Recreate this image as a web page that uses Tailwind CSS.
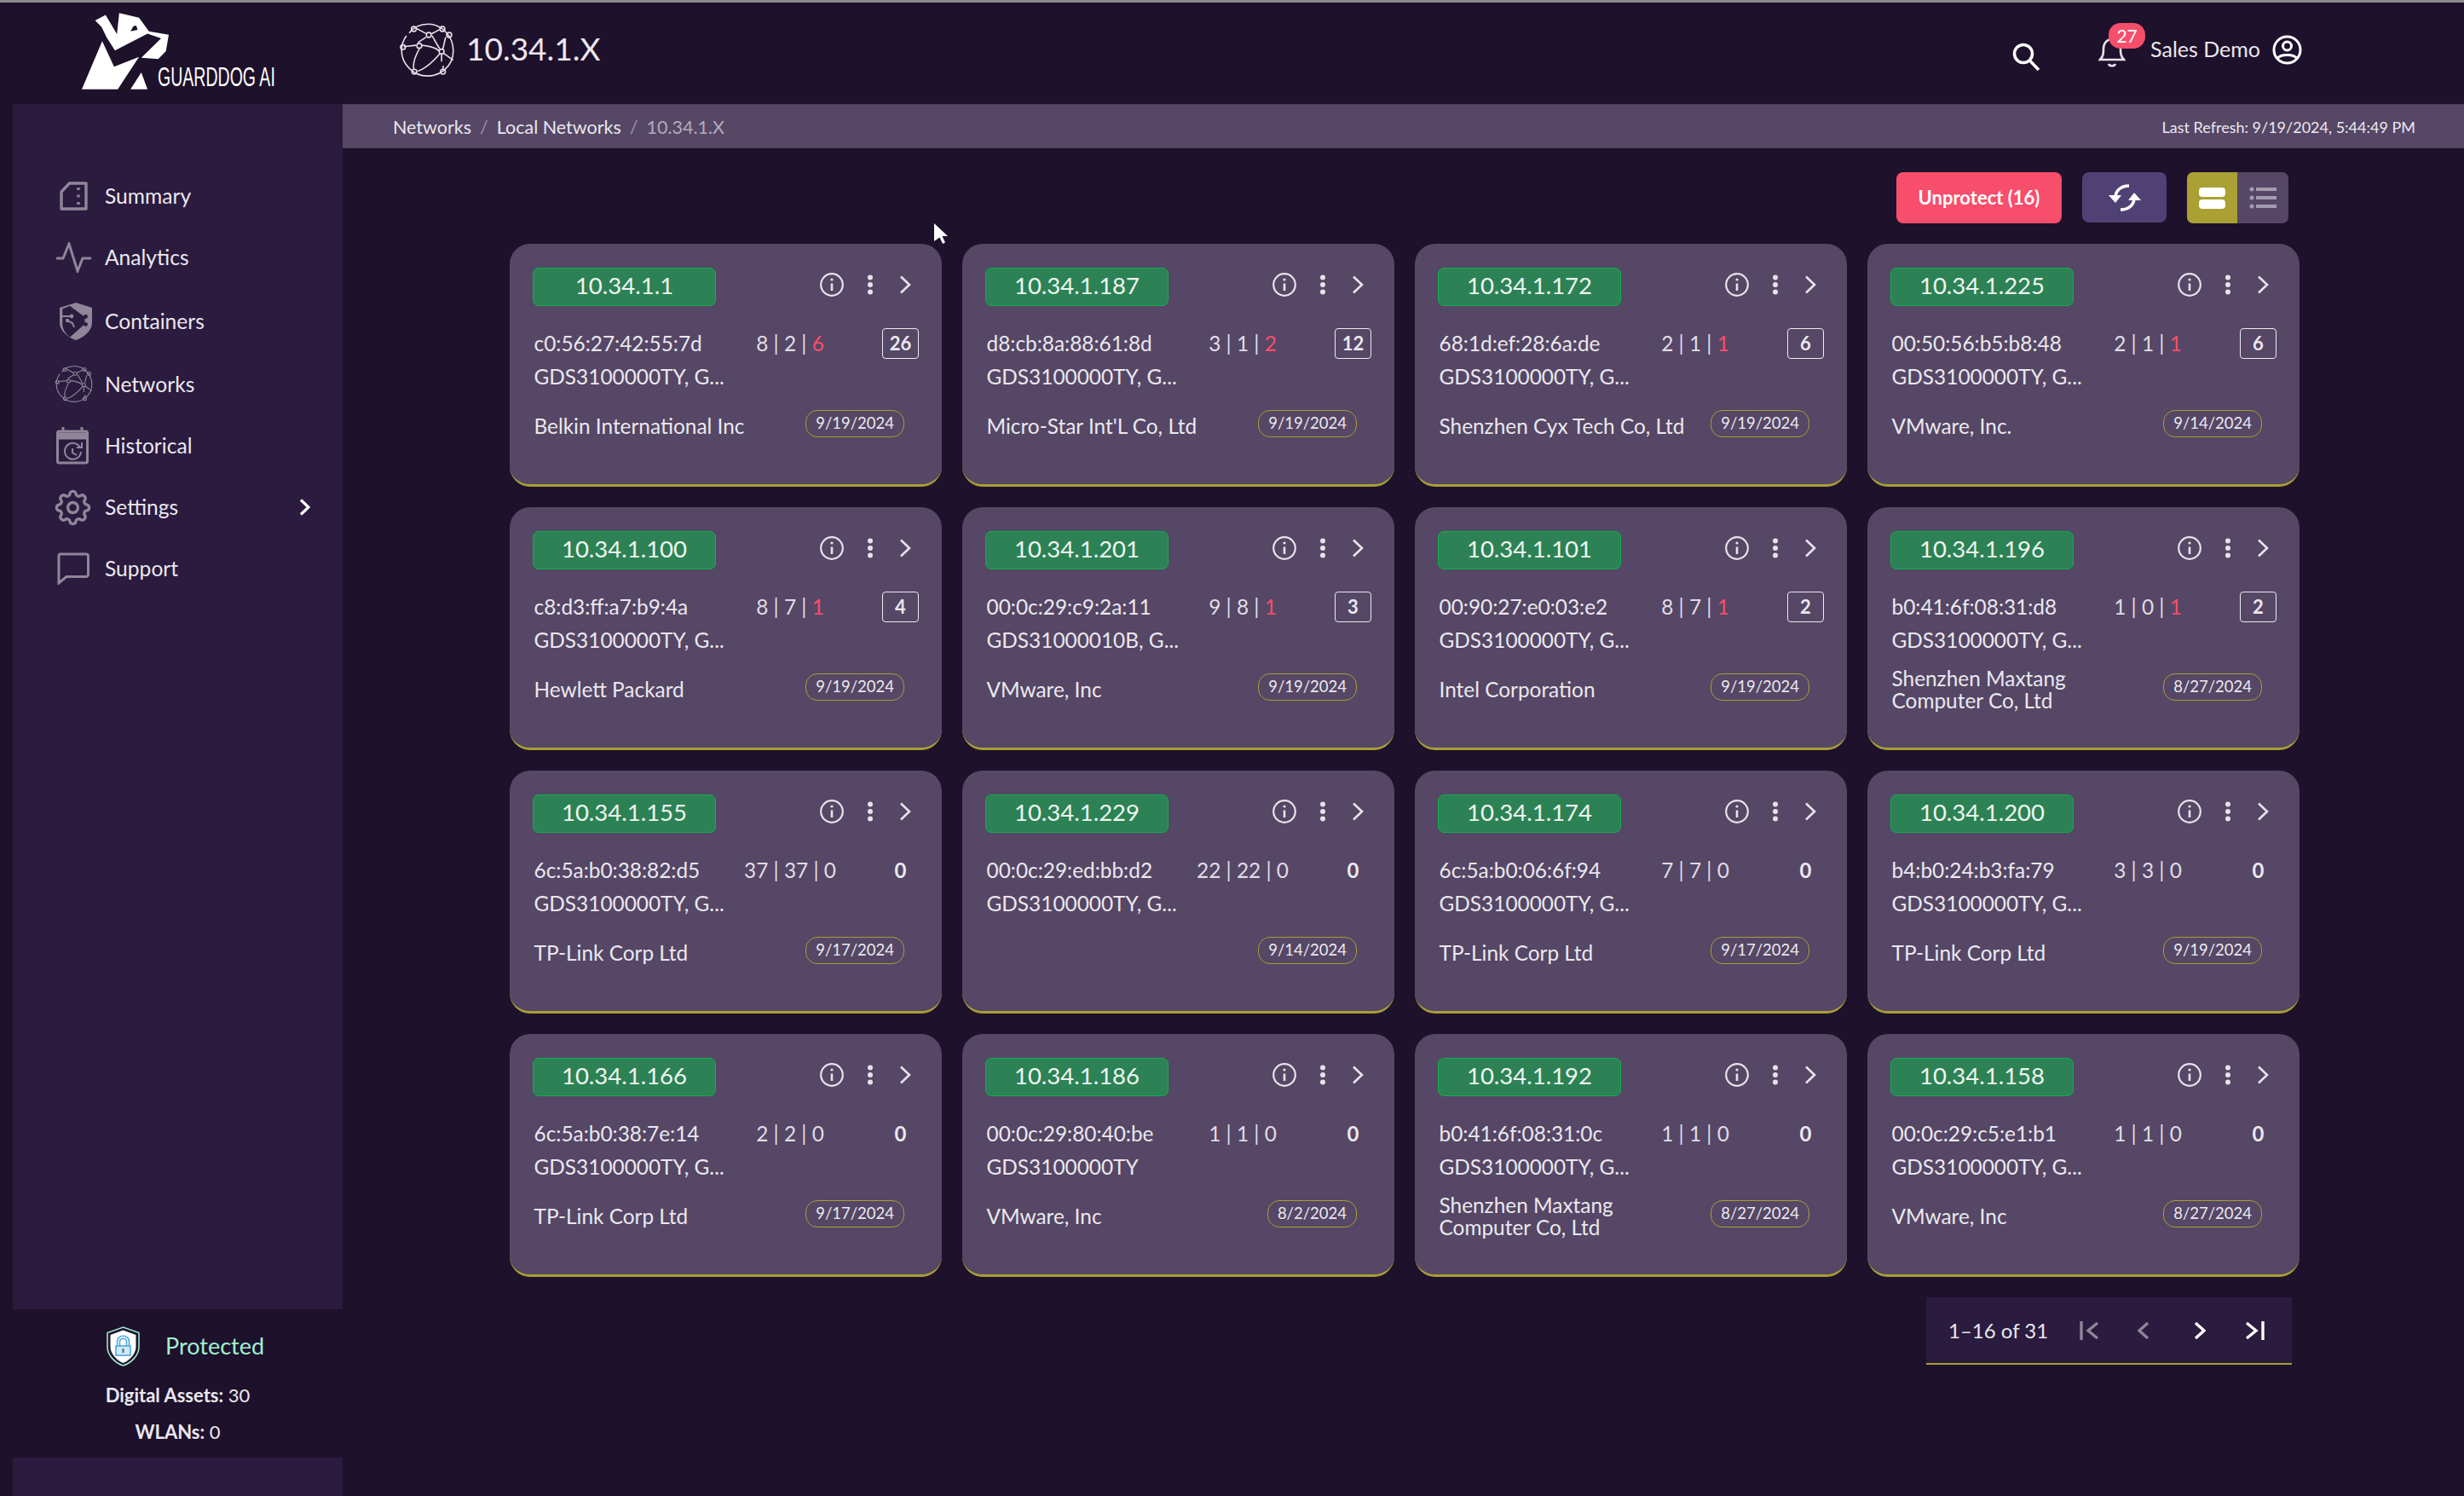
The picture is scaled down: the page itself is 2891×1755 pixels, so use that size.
<!DOCTYPE html>
<html lang="en">
<head>
    <meta charset="UTF-8">
    <meta name="viewport" content="width=device-width, initial-scale=1.0">
    <title>Guarddog AI - 10.34.1.X</title>
    <script src="https://cdn.jsdelivr.net/npm/@tailwindcss/browser@4"></script>
</head>
<body class="bg-[#1e112b] text-[#ebe8ef] font-['Lato',sans-serif] w-[2891px] h-[1755px] overflow-hidden relative">
    <svg class="hidden">
        <symbol id="globe" viewBox="50 45 210 210">
            <g fill="none" stroke="currentColor" stroke-width="5">
                <path d="M88 85C108 58 135 52 158 52C205 52 250 95 250 150C250 205 205 243 155 243C105 243 60 200 60 150C60 125 70 105 78 95"/>
                <path d="M115 68L150 87M170 88L200 72M172 95L200 143M68 135L113 130M135 130C160 132 185 140 198 150M125 143C110 170 100 195 105 217M120 225C150 215 180 185 200 162M215 160L250 185M207 163V190M214 205L212 217M120 120L150 100M222 100L212 143"/>
                <circle cx="105" cy="70" r="9"/><circle cx="210" cy="70" r="9"/><circle cx="235" cy="92" r="9"/>
                <circle cx="160" cy="92" r="9"/><circle cx="125" cy="132" r="9"/><circle cx="65" cy="137" r="9"/>
                <circle cx="207" cy="153" r="9"/><circle cx="107" cy="227" r="9"/><circle cx="212" cy="227" r="9"/>
            </g>
        </symbol>
    </svg>

    <div class="h-[3px] bg-[#8a8a8a]"></div>

    <!-- Header -->
    <header class="h-[119px] flex">
        <div class="w-[402px] shrink-0 pl-[96px] pt-[12px] flex items-start">
            <svg class="w-[103px] h-[90px] shrink-0" viewBox="108 45 310 270" fill="#fff">
                <path d="M155 72L192 52L232 120L240 45L310 62L345 110L415 122L405 180L378 208L318 203L388 135L340 118L225 178L195 130L178 95Z"/>
                <path d="M108 315L180 145L222 235L310 200L235 315Z"/>
                <path d="M280 315L318 255L340 315Z"/>
                <path d="M290 92L300 90L305 105L280 110Z" fill="#1e112b"/>
            </svg>
            <span class="-ml-[14px] mt-[58px] text-[31px] leading-[36px] text-white font-['Liberation_Sans',sans-serif] whitespace-nowrap origin-left scale-x-[0.63]">GUARDDOG AI</span>
        </div>
        <div class="flex items-start pl-[66px] pt-[23px]">
            <svg class="w-[67px] h-[67px] text-[#e6e3ea]"><use href="#globe"/></svg>
            <span class="ml-[12px] mt-[6px] text-[37px] leading-[50px]">10.34.1.X</span>
        </div>
        <div class="ml-auto flex items-start pr-[190px]">
            <svg class="w-[34px] h-[34px] mt-[46px] mr-[66px] text-white" viewBox="0 0 34 34" fill="none" stroke="currentColor" stroke-width="3.5"><circle cx="14" cy="14" r="10.5"/><path d="M21.5 22L32 33"/></svg>
            <div class="relative w-[45px] mt-[24px]">
                <svg class="w-[32px] h-[36px] ml-[2px] mt-[16px] text-[#e6e3ea]" viewBox="0 0 32 36" fill="none" stroke="currentColor" stroke-width="2.6"><path d="M2 27C6 23 6 19 6 14C6 8 10 3 16 3C22 3 26 8 26 14C26 19 26 23 30 27Z"/><path d="M12 32C13 35 19 35 20 32"/></svg>
                <span class="absolute left-[14px] top-0 w-[43px] h-[30px] rounded-[14px] bg-[#f74e6c] text-white text-[21px] leading-[30px] text-center">27</span>
            </div>
            <span class="ml-[18px] mt-[38px] text-[25px] leading-[32px]">Sales Demo</span>
            <svg class="w-[35px] h-[35px] ml-[14px] mt-[38px] text-white" viewBox="0 0 35 35" fill="none" stroke="currentColor" stroke-width="3"><circle cx="17.5" cy="17.5" r="15.5"/><circle cx="17.5" cy="13" r="5"/><path d="M6 28C9 22 26 22 29 28"/></svg>
        </div>
    </header>

    <div class="flex h-[1633px]">
        <!-- Sidebar -->
        <aside class="w-[387px] ml-[15px] shrink-0 bg-[#2a1b3f] flex flex-col">
            <nav class="pt-[72px] flex flex-col text-[24.6px]">
                <a class="h-[72px] flex items-center"><span class="w-[108px] pl-[55px]"><svg class="w-[33px] h-[34px] text-[#8f8699]" viewBox="0 0 33 34" fill="none" stroke="currentColor" stroke-width="3.4"><path d="M2 12L11.5 2H31V32H2Z" stroke-linejoin="round"/><path d="M22 7V10M22 15.5V18.5M22 24V27" stroke-width="3.4"/></svg></span><span>Summary</span></a>
                <a class="h-[72px] flex items-center"><span class="w-[108px] pl-[51px]"><svg class="w-[41px] h-[36px] text-[#8f8699]" viewBox="0 0 41 36" fill="none" stroke="currentColor" stroke-width="3" stroke-linecap="round"><path d="M1 19H8L15 2L25 34L31 19H40"/></svg></span><span>Analytics</span></a>
                <a class="h-[72px] mt-[3px] flex items-center"><span class="w-[108px] pl-[55px]"><svg class="w-[38px] h-[44px] text-[#8f8699]" viewBox="0 0 38 44" fill="currentColor"><path d="M19 0L38 6V24C38 33 28 41 19 44C10 41 0 33 0 24V6Z"/><path d="M3.3 7.6L13 3.5L30 16V26L13 41C8 38 3.3 32 3.3 25Z" fill="#2a1b3f"/><path d="M13 3.5L30.5 16.5V25.5L13 41M3 16H14M9 21L15 24L17 29" fill="none" stroke="currentColor" stroke-width="2"/><circle cx="14" cy="16" r="2.4"/><circle cx="9" cy="21" r="2.2"/><circle cx="30.5" cy="16.5" r="2.4" fill="#2a1b3f"/><circle cx="30.5" cy="25.5" r="2.4" fill="#2a1b3f"/></svg></span><span>Containers</span></a>
                <a class="h-[72px] mt-[2px] flex items-center"><span class="w-[108px] pl-[49px]"><svg class="w-[46px] h-[46px] text-[#8f8699]"><use href="#globe"/></svg></span><span>Networks</span></a>
                <a class="h-[72px] flex items-center"><span class="w-[108px] pl-[51px]"><svg class="w-[38px] h-[44px] text-[#8f8699]" viewBox="0 0 38 44" fill="none" stroke="currentColor" stroke-width="3"><rect x="1.5" y="5" width="35" height="37" rx="2"/><path d="M1 8H37V13H1Z" fill="currentColor"/><path d="M8 0V6M30 0V6"/><path d="M28 24A9.5 9.5 0 1 0 29 29" stroke-width="2"/><path d="M19 25V30L24 33" stroke-width="2"/><path d="M24 24H30V18" stroke-width="2"/></svg></span><span>Historical</span></a>
                <a class="h-[72px] flex items-center relative"><span class="w-[108px] pl-[48px]"><svg class="w-[45px] h-[45px] text-[#8f8699]" viewBox="0 0 24 24" fill="none" stroke="currentColor" stroke-width="1.8"><path d="M20.8 10.13A1.95 1.95 0 0 1 20.8 13.87A1.8 1.8 0 0 0 19.55 16.9A1.95 1.95 0 0 1 16.9 19.55A1.8 1.8 0 0 0 13.87 20.8A1.95 1.95 0 0 1 10.13 20.8A1.8 1.8 0 0 0 7.1 19.55A1.95 1.95 0 0 1 4.45 16.9A1.8 1.8 0 0 0 3.2 13.87A1.95 1.95 0 0 1 3.2 10.13A1.8 1.8 0 0 0 4.45 7.1A1.95 1.95 0 0 1 7.1 4.45A1.8 1.8 0 0 0 10.13 3.2A1.95 1.95 0 0 1 13.87 3.2A1.8 1.8 0 0 0 16.9 4.45A1.95 1.95 0 0 1 19.55 7.1A1.8 1.8 0 0 0 20.8 10.13Z"/><circle cx="12" cy="12" r="3.2"/></svg></span><span>Settings</span><svg class="absolute left-[336px] top-[26px] w-[13px] h-[20px] text-white" viewBox="0 0 13 20" fill="none" stroke="currentColor" stroke-width="3.2"><path d="M2 1.5L11 10L2 18.5"/></svg></a>
                <a class="h-[72px] flex items-center"><span class="w-[108px] pl-[52px]"><svg class="w-[38px] h-[38px] text-[#8f8699]" viewBox="0 0 38 38" fill="none" stroke="currentColor" stroke-width="3"><path d="M4 2H34A2.5 2.5 0 0 1 36.5 4.5V26A2.5 2.5 0 0 1 34 28.5H11L2 36V4A2 2 0 0 1 4 2Z"/></svg></span><span>Support</span></a>
            </nav>
        </aside>

        <!-- Main -->
        <main class="flex-1 min-w-0">
            <div class="h-[52px] bg-[#554765] border-y border-[#4a3d5c] flex items-center justify-between pl-[59px] pr-[57px] pt-[2px] text-[21.5px]">
                <div class="flex items-center">
                    <span>Networks</span><span class="mx-[10px] text-[#9b91a8]">/</span><span>Local Networks</span><span class="mx-[10px] text-[#9b91a8]">/</span><span class="text-[#b3aabd]">10.34.1.X</span>
                </div>
                <span class="text-[18px]">Last Refresh: 9/19/2024, 5:44:49 PM</span>
            </div>

            <div class="flex justify-end items-start pt-[28px] pr-[206px] gap-[24px]">
                <button class="w-[194px] h-[60px] pb-[2px] rounded-[8px] bg-[#f74e6c] text-white text-[22px] font-bold">Unprotect (16)</button>
                <button class="w-[99px] h-[59px] rounded-[8px] bg-[#4f4174] flex items-center justify-center">
                    <svg class="w-[38px] h-[32px] text-white" viewBox="0 0 38 32" fill="none" stroke="currentColor" stroke-width="3.6"><path d="M8 16C8 8 14 2 24 2"/><path d="M0 13H15L8 22Z" fill="currentColor" stroke="none"/><path d="M30 16C30 24 24 30 14 30"/><path d="M38 19H23L30 10Z" fill="currentColor" stroke="none"/></svg>
                </button>
                <div class="flex w-[119px] h-[60px] rounded-[7px] overflow-hidden">
                    <span class="w-[59px] bg-[#aaa034] flex flex-col items-center justify-center gap-[3px]">
                        <i class="block w-[31px] h-[11px] rounded-[4px] bg-white"></i>
                        <i class="block w-[31px] h-[11px] rounded-[4px] bg-white"></i>
                    </span>
                    <span class="w-[60px] bg-[#554765] flex items-center justify-center">
                        <svg class="w-[32px] h-[26px] text-[#a39cae]" viewBox="0 0 32 26" fill="currentColor"><circle cx="3" cy="3" r="2.5"/><circle cx="3" cy="13" r="2.5"/><circle cx="3" cy="23" r="2.5"/><rect x="8" y="1" width="24" height="4"/><rect x="8" y="11" width="24" height="4"/><rect x="8" y="21" width="24" height="4"/></svg>
                    </span>
                </div>
            </div>

            <div id="cards" class="w-[2100px] ml-[196px] mt-[24px] grid grid-cols-4 gap-[24px]"></div>

            <div class="w-[429px] h-[79px] ml-[1858px] mt-[24px] bg-[#2a1b3f] border-b-2 border-[#a89f35] flex items-center pl-[26px]">
                <span class="text-[24px] w-[154px] shrink-0">1–16 of 31</span>
                <svg class="w-[23px] h-[22px] text-[#8f8699]" viewBox="0 0 23 22" fill="none" stroke="currentColor" stroke-width="3.4"><path d="M2 0V22"/><path d="M21 2L10 11L21 20"/></svg>
                <svg class="w-[14px] h-[22px] ml-[45px] text-[#8f8699]" viewBox="0 0 14 22" fill="none" stroke="currentColor" stroke-width="3.4"><path d="M12 2L2 11L12 20"/></svg>
                <svg class="w-[14px] h-[22px] ml-[52px] text-white" viewBox="0 0 14 22" fill="none" stroke="currentColor" stroke-width="3.4"><path d="M2 2L12 11L2 20"/></svg>
                <svg class="w-[23px] h-[22px] ml-[46px] text-white" viewBox="0 0 23 22" fill="none" stroke="currentColor" stroke-width="3.4"><path d="M2 2L13 11L2 20"/><path d="M21 0V22"/></svg>
            </div>
        </main>
    </div>

    <!-- Status block over the sidebar -->
    <div class="absolute left-[15px] top-[1536px] w-[387px] h-[174px] bg-[#1e112b]">
        <div class="flex items-center pl-[110px] pt-[20px]">
            <svg class="w-[39px] h-[47px] shrink-0" viewBox="0 0 39 47">
                <path d="M19.5 1L38 7.5V24C38 34 29 43 19.5 46C10 43 1 34 1 24V7.5Z" fill="#1e112b" stroke="#9ae8cc" stroke-width="1.6"/>
                <path d="M19.5 4.5L34.5 10V24C34.5 32 27 40 19.5 43C12 40 4.5 32 4.5 24V10Z" fill="#fff"/>
                <path d="M12.5 23V18C12.5 9 26.5 9 26.5 18V23M15.5 23V18C15.5 13 23.5 13 23.5 18V23" fill="none" stroke="#4aa8dc" stroke-width="1.6"/>
                <rect x="11" y="23" width="17" height="11" fill="#d3e9f6" stroke="#4aa8dc" stroke-width="1.6"/>
                <path d="M19.5 26V31" stroke="#2b6f9e" stroke-width="2"/>
            </svg>
            <span class="ml-[30px] text-[27px] text-[#a0f0d2] -mt-[1px]">Protected</span>
        </div>
        <p class="text-center text-[22px] leading-[30px] mt-[19px]"><b>Digital Assets:</b> 30</p>
        <p class="text-center text-[22px] leading-[30px] mt-[13px]"><b>WLANs:</b> 0</p>
    </div>

    <!-- Mouse pointer -->
    <svg class="absolute left-[1094px] top-[260px] w-[20px] h-[30px]" viewBox="0 0 20 30"><path d="M2 2L18 17H11.5L15 24.5L12 26L8.5 18.5L2 23Z" fill="#fff"/></svg>

    <script>
        const devices = [
            ['10.34.1.1', 'c0:56:27:42:55:7d', '8 | 2 | ', '6', '26', 'GDS3100000TY, G...', 'Belkin International Inc', '9/19/2024'],
            ['10.34.1.187', 'd8:cb:8a:88:61:8d', '3 | 1 | ', '2', '12', 'GDS3100000TY, G...', "Micro-Star Int'L Co, Ltd", '9/19/2024'],
            ['10.34.1.172', '68:1d:ef:28:6a:de', '2 | 1 | ', '1', '6', 'GDS3100000TY, G...', 'Shenzhen Cyx Tech Co, Ltd', '9/19/2024'],
            ['10.34.1.225', '00:50:56:b5:b8:48', '2 | 1 | ', '1', '6', 'GDS3100000TY, G...', 'VMware, Inc.', '9/14/2024'],
            ['10.34.1.100', 'c8:d3:ff:a7:b9:4a', '8 | 7 | ', '1', '4', 'GDS3100000TY, G...', 'Hewlett Packard', '9/19/2024'],
            ['10.34.1.201', '00:0c:29:c9:2a:11', '9 | 8 | ', '1', '3', 'GDS31000010B, G...', 'VMware, Inc', '9/19/2024'],
            ['10.34.1.101', '00:90:27:e0:03:e2', '8 | 7 | ', '1', '2', 'GDS3100000TY, G...', 'Intel Corporation', '9/19/2024'],
            ['10.34.1.196', 'b0:41:6f:08:31:d8', '1 | 0 | ', '1', '2', 'GDS3100000TY, G...', 'Shenzhen Maxtang<br>Computer Co, Ltd', '8/27/2024'],
            ['10.34.1.155', '6c:5a:b0:38:82:d5', '37 | 37 | 0', '', '0', 'GDS3100000TY, G...', 'TP-Link Corp Ltd', '9/17/2024'],
            ['10.34.1.229', '00:0c:29:ed:bb:d2', '22 | 22 | 0', '', '0', 'GDS3100000TY, G...', '', '9/14/2024'],
            ['10.34.1.174', '6c:5a:b0:06:6f:94', '7 | 7 | 0', '', '0', 'GDS3100000TY, G...', 'TP-Link Corp Ltd', '9/17/2024'],
            ['10.34.1.200', 'b4:b0:24:b3:fa:79', '3 | 3 | 0', '', '0', 'GDS3100000TY, G...', 'TP-Link Corp Ltd', '9/19/2024'],
            ['10.34.1.166', '6c:5a:b0:38:7e:14', '2 | 2 | 0', '', '0', 'GDS3100000TY, G...', 'TP-Link Corp Ltd', '9/17/2024'],
            ['10.34.1.186', '00:0c:29:80:40:be', '1 | 1 | 0', '', '0', 'GDS3100000TY', 'VMware, Inc', '8/2/2024'],
            ['10.34.1.192', 'b0:41:6f:08:31:0c', '1 | 1 | 0', '', '0', 'GDS3100000TY, G...', 'Shenzhen Maxtang<br>Computer Co, Ltd', '8/27/2024'],
            ['10.34.1.158', '00:0c:29:c5:e1:b1', '1 | 1 | 0', '', '0', 'GDS3100000TY, G...', 'VMware, Inc', '8/27/2024'],
        ];

        document.getElementById('cards').innerHTML = devices.map(([ip, mac, counts, red, alerts, model, vendor, date]) => {
            const alertBox = alerts !== '0'
                ? 'border border-[#eeeaf2] rounded-[4px] text-[22px] leading-[34px]'
                : 'text-[24px] leading-[36px]';
            return `
            <div class="h-[285px] rounded-[24px] bg-[#554765] border-b-[3px] border-[#a89f35] px-[27px] pt-[28px] text-[24.4px]">
                <div class="flex items-center h-[45px]">
                    <span class="w-[215px] h-[45px] rounded-[7px] bg-[#2c8255] border border-[#12ad4f] text-[27.5px] leading-[40px] text-center text-[#eef5ef]">${ip}</span>
                    <div class="flex items-center mb-[5px]">
                        <svg class="w-[28px] h-[28px] ml-[122px] text-[#e6e3ea]" viewBox="0 0 28 28" fill="none" stroke="currentColor" stroke-width="2.2"><circle cx="14" cy="14" r="12.8"/><path d="M14 12.5V21" stroke-width="2.6"/><circle cx="14" cy="8" r="1.6" fill="currentColor" stroke="none"/></svg>
                        <svg class="w-[8px] h-[24px] ml-[27px] text-[#e6e3ea]" viewBox="0 0 8 24" fill="currentColor"><circle cx="4" cy="3.5" r="3"/><circle cx="4" cy="12" r="3"/><circle cx="4" cy="20.5" r="3"/></svg>
                        <svg class="w-[14px] h-[22px] ml-[30px] text-[#e6e3ea]" viewBox="0 0 14 22" fill="none" stroke="currentColor" stroke-width="2.6"><path d="M2 1.5L12 11L2 20.5"/></svg>
                    </div>
                </div>
                <div class="flex items-center h-[36px] mt-[26px]">
                    <span class="w-[222px] pl-[1.5px] shrink-0 whitespace-nowrap">${mac}</span>
                    <span class="w-[160px] text-center text-[#e0dce5]">${counts}<span class="text-[#f74e6c]">${red}</span></span>
                    <span class="ml-auto w-[43px] h-[36px] font-bold text-center ${alertBox}">${alerts}</span>
                </div>
                <div class="h-[30px] mt-[6px] pl-[1.5px] leading-[30px]">${model}</div>
                <div class="flex items-center h-[40px] mt-[23px]">
                    <span class="pl-[1.5px] leading-[26px]">${vendor}</span>
                    <span class="ml-auto mr-[17px] mb-[6px] h-[32px] px-[11px] rounded-[14px] border border-[#a89f35] text-[18.5px] leading-[28px]">${date}</span>
                </div>
            </div>`;
        }).join('');
    </script>
</body>
</html>
